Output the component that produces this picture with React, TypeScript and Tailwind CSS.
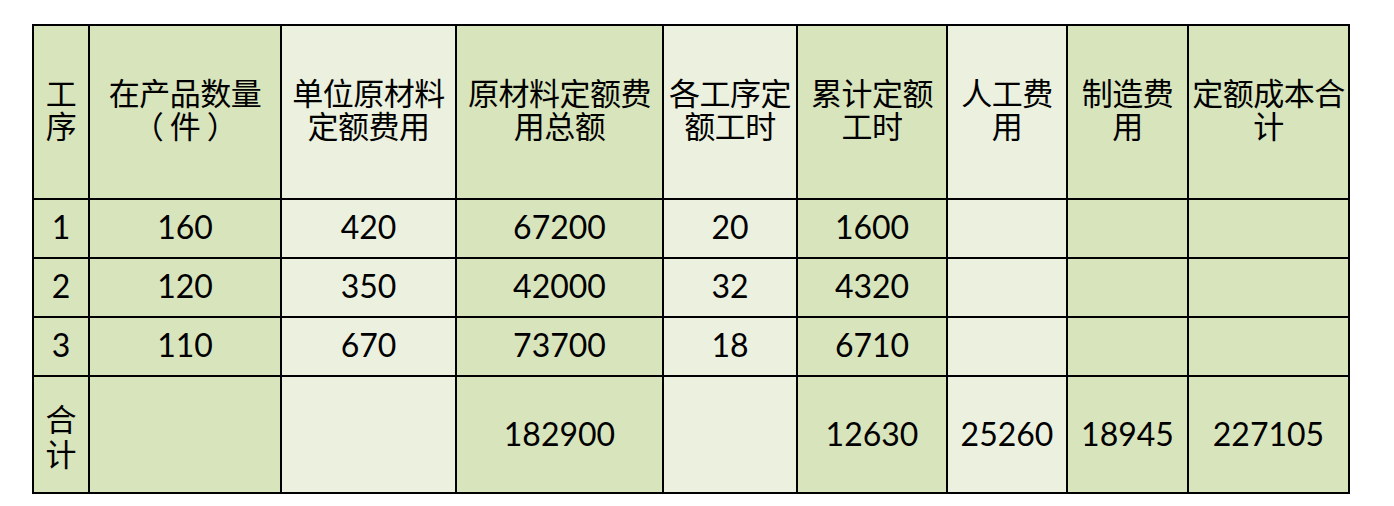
import React from "react";

const G = "bg-[#d8e4bc]";
const L = "bg-[#ebf1de]";
const colBg = [G, G, L, G, L, G, L, G, G];
const widths = [56, 192, 175, 207, 134, 150, 120, 121, 161];

const header = [
  "工序",
  "在产品数量（件）",
  "单位原材料定额费用",
  "原材料定额费用总额",
  "各工序定额工时",
  "累计定额工时",
  "人工费用",
  "制造费用",
  "定额成本合计",
];

const rows = [
  ["1", "160", "420", "67200", "20", "1600", "", "", ""],
  ["2", "120", "350", "42000", "32", "4320", "", "", ""],
  ["3", "110", "670", "73700", "18", "6710", "", "", ""],
];

const total = ["合计", "", "", "182900", "", "12630", "25260", "18945", "227105"];

const cjk = { fontFamily: '"Noto Sans CJK SC", sans-serif' };

export default function App() {
  return (
    <div className="w-[1394px] h-[506px] bg-white pt-[24px] pl-[32px]">
      <table
        className="table-fixed border-collapse text-black text-[32px] leading-[34px]"
        style={{ fontFamily: '"Lato", "Noto Sans CJK SC", sans-serif' }}
      >
        <colgroup>
          {widths.map((w, i) => (
            <col key={i} style={{ width: w }} />
          ))}
        </colgroup>
        <tbody>
          <tr className="h-[174px]">
            {header.map((h, i) => (
              <td
                key={i}
                className={`${colBg[i]} border-2 border-black text-center align-middle px-0 pb-[8px] text-[31px] leading-[33px] tracking-[-0.5px]`}
                style={cjk}
              >
                {h === "在产品数量（件）" ? (
                  <>
                    在产品数量
                    <br />
                    <span className="whitespace-pre">（ 件 ）</span>
                  </>
                ) : (
                  h
                )}
              </td>
            ))}
          </tr>
          {rows.map((r, ri) => (
            <tr key={ri} className="h-[59px]">
              {r.map((c, i) => (
                <td
                  key={i}
                  className={`${colBg[i]} border-2 border-black text-center align-middle pb-[3px]`}
                >
                  {c}
                </td>
              ))}
            </tr>
          ))}
          <tr className="h-[117px]">
            {total.map((c, i) => (
              <td
                key={i}
                className={`${colBg[i]} border-2 border-black text-center align-middle ${
                  i === 0 ? "text-[31px] leading-[35px]" : "pb-[2px]"
                }`}
                style={i === 0 ? cjk : undefined}
              >
                {c}
              </td>
            ))}
          </tr>
        </tbody>
      </table>
    </div>
  );
}
